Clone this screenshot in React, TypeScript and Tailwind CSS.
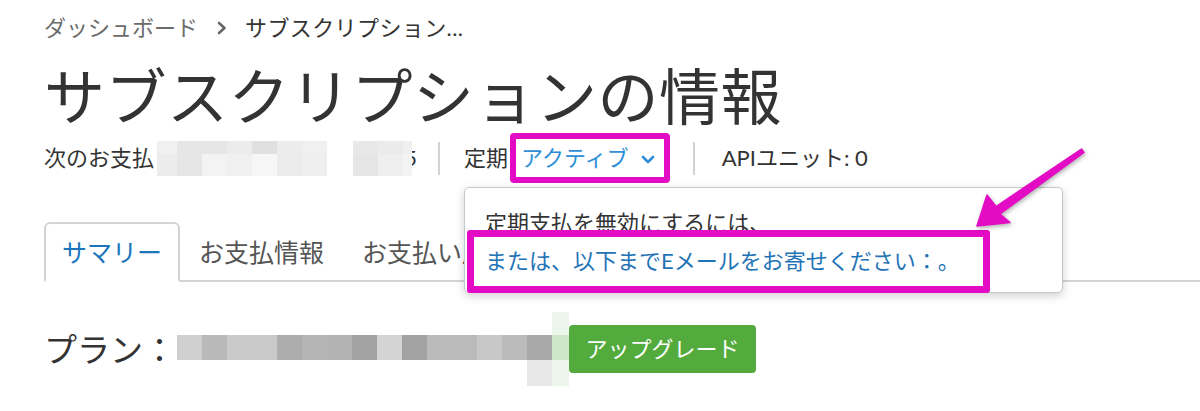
import React from "react";

const row2TopA = ["#f0f0f0", "#e6e6e6", "#e6e6e6", "#ececec", "#e0e0e0", "#ececec", "#f0f0f0"];
const row2BotA = ["#ececec", "#e6e6e6", "#f3f3f3", "#f0f0f0", "#f6f6f6", "#ececec", "#efefef"];
const row2WA = [20, 25, 25, 25, 25, 25, 25];
const row2TopB = ["#e8e8e8", "#ebebeb", "#f0f0f0"];
const row2BotB = ["#e6e6e6", "#efefef", "#f3f3f3"];
const row2WB = [25, 25, 9];

const planColors = [
  "#cfcfcf", "#b9b9b9", "#cacaca", "#c9c9c9", "#adadad", "#b5b5b5", "#b3b3b3", "#a3a3a3",
  "#d4d4d4", "#a2a2a2", "#bababa", "#bababa", "#c8c8c8", "#bbbbbb", "#a8a8a8",
];

function Mosaic2({ top, bot, widths }: { top: string[]; bot: string[]; widths: number[] }) {
  return (
    <div className="flex flex-col">
      <div className="flex h-[13px]">
        {top.map((c, i) => (
          <div key={i} className="h-full" style={{ backgroundColor: c, width: widths[i] }} />
        ))}
      </div>
      <div className="flex h-[22px]">
        {bot.map((c, i) => (
          <div key={i} className="h-full" style={{ backgroundColor: c, width: widths[i] }} />
        ))}
      </div>
    </div>
  );
}

export default function App() {
  return (
    <div className="relative w-[1200px] h-[411px] overflow-hidden bg-white pl-[44px] font-['Lato','Noto_Sans_CJK_JP',sans-serif] text-[#333333]">
      {/* breadcrumb */}
      <div className="mt-[12px] flex h-[32px] items-center text-[22px] leading-[32px]">
        <span className="text-[#6b6b6b]">ダッシュボード</span>
        <svg width="10" height="14" viewBox="0 0 10 14" className="ml-[19px] mr-[18px]">
          <path d="M2 2 L7.5 7 L2 12" fill="none" stroke="#666666" strokeWidth="2.6" strokeLinecap="round" strokeLinejoin="round" />
        </svg>
        <span className="tracking-[0.4px] text-[#333333]">サブスクリプション...</span>
      </div>

      {/* title */}
      <h1 className="mt-[17px] h-[72px] text-[61px] leading-[72px] font-normal tracking-[0.5px]">
        サブスクリプションの情報
      </h1>

      {/* status row */}
      <div className="flex h-[50px] items-center text-[22px] leading-[30px]">
        <span>次のお支払</span>
        <div className="ml-[3px] flex items-center">
          <Mosaic2 top={row2TopA} bot={row2BotA} widths={row2WA} />
        </div>
        <div className="ml-[26px] flex items-center">
          <Mosaic2 top={row2TopB} bot={row2BotB} widths={row2WB} />
        </div>
        <div className="flex h-[30px] w-[5px] justify-end overflow-hidden">
          <span className="shrink-0">5</span>
        </div>
        <div className="ml-[21px] h-[33px] w-[2px] bg-[#d2d2d2]" />
        <span className="ml-[24px]">定期</span>
        <div className="ml-[2px] flex h-[50px] items-center rounded-[4px] border-[6px] border-[#e40bc4] pl-[5px] pr-[9px]">
          <span className="text-[#2e8fd8]">アクティブ</span>
          <svg width="14" height="9" viewBox="0 0 14 9" className="ml-[12px] mt-[3px]">
            <path d="M2 2 L7 7 L12 2" fill="none" stroke="#2e8fd8" strokeWidth="2.6" strokeLinecap="round" strokeLinejoin="round" />
          </svg>
        </div>
        <div className="ml-[23px] h-[33px] w-[2px] bg-[#d2d2d2]" />
        <span className="ml-[27px]">APIユニット: 0</span>
      </div>

      {/* tabs */}
      <div className="mt-[39px] flex h-[60px] items-end border-b-2 border-[#d4d4d4] text-[25px] leading-[34px]">
        <div className="-mb-[2px] flex h-[60px] items-center rounded-t-[6px] border-2 border-[#d4d4d4] border-b-white bg-white px-[16px] text-[#1a75bc]">
          サマリー
        </div>
        <div className="-mb-[2px] flex h-[60px] items-center border-2 border-transparent px-[17px] text-[#555555]">
          お支払情報
        </div>
        <div className="-mb-[2px] flex h-[60px] items-center border-2 border-transparent px-[17px] text-[#555555]">
          お支払い履歴
        </div>
      </div>

      {/* plan row */}
      <div className="mt-[30px] flex items-center">
        <span className="w-[133px] text-[33px] leading-[44px]">プラン：</span>
        <div className="flex h-[74px] flex-col">
          <div className="flex h-[23px] justify-end">
            <div className="h-full w-[17px] bg-[#edf6ea]" />
          </div>
          <div className="flex h-[25px]">
            {planColors.map((c, i) => (
              <div key={i} className="h-full w-[25px]" style={{ backgroundColor: c }} />
            ))}
            <div className="h-full w-[17px] bg-[#cfe6c9]" />
          </div>
          <div className="flex h-[26px] justify-end">
            <div className="h-full w-[25px] bg-[#e8e8e8]" />
            <div className="h-full w-[17px] bg-[#edf6ea]" />
          </div>
        </div>
        <button className="flex h-[48px] w-[187px] items-center justify-center rounded-[4px] bg-[#53ab3d] text-[22px] leading-[30px] text-white">
          アップグレード
        </button>
      </div>

      {/* dropdown popup */}
      <div className="absolute left-[464px] top-[187px] h-[106px] w-[599px] rounded-[5px] border-[1.5px] border-[#c3c8cd] bg-white pl-[20px] pt-[19px] text-[22px] leading-[32px] shadow-[0_3px_10px_rgba(0,0,0,0.18)]">
        <div className="text-[#333333]">定期支払を無効にするには、</div>
        <div className="mt-[6px] text-[#1f73b7]">または、以下までEメールをお寄せください：。</div>
      </div>

      {/* annotation box */}
      <div className="absolute left-[467px] top-[230px] h-[63px] w-[523px] rounded-[3px] border-[7px] border-[#e40bc4]" />

      {/* annotation arrow */}
      <svg
        className="pointer-events-none absolute left-0 top-0 drop-shadow-[1px_2px_2px_rgba(0,0,0,0.3)]"
        width="1200"
        height="411"
        viewBox="0 0 1200 411"
      >
        <polygon
          points="1081.5,149 996,206.5 987,195 977,226 1010,222.5 1000,214 1084,152.5"
          fill="#e40bc4"
          strokeLinejoin="round"
          stroke="#e40bc4"
          strokeWidth="1.5"
        />
      </svg>
    </div>
  );
}
